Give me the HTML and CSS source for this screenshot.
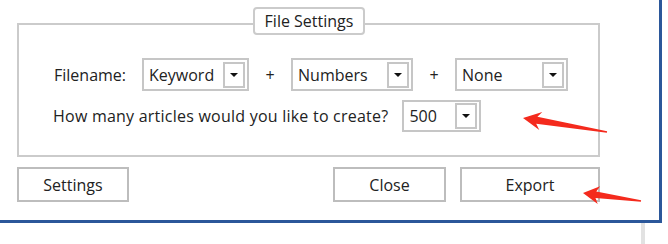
FILE: index.html
```html
<!DOCTYPE html>
<html lang="en">
<head>
  <meta charset="UTF-8">
  <meta name="viewport" content="width=device-width, initial-scale=1.0">
  <title>File Settings</title>
  <link rel="stylesheet" href="styles.css">
</head>
<body>

<div class="window">
  <div class="group">
    <div class="legend">File Settings</div>

    <div class="row">
      <span class="label">Filename:</span>
      <div class="combo combo-keyword">
        <span class="value">Keyword</span>
        <span class="drop"><i class="tri"></i></span>
      </div>
      <span class="plus">+</span>
      <div class="combo combo-numbers">
        <span class="value">Numbers</span>
        <span class="drop"><i class="tri"></i></span>
      </div>
      <span class="plus">+</span>
      <div class="combo combo-none">
        <span class="value">None</span>
        <span class="drop"><i class="tri"></i></span>
      </div>
    </div>

    <div class="row row-count">
      <span class="label">How many articles would you like to create?</span>
      <div class="combo combo-count">
        <span class="value">500</span>
        <span class="drop"><i class="tri"></i></span>
      </div>
    </div>
  </div>

  <div class="buttons">
    <button class="btn btn-settings">Settings</button>
    <button class="btn btn-close">Close</button>
    <button class="btn btn-export">Export</button>
  </div>
</div>

<div class="behind"></div>

<!-- red annotation arrows drawn on top of the screenshot -->
<svg class="marks" width="668" height="244" viewBox="0 0 668 244">
  <polygon fill="#f42a1d" points="523,118 542.3,112.1 537.4,116.8 607.1,131.2 606.9,132.8 536.2,123.8 539.3,129.9"/>
  <polygon fill="#f42a1d" points="583,193 600.1,186.3 596.3,191.6 641.1,200.2 640.9,201.8 595.5,198 597.7,204.1"/>
</svg>

</body>
</html>
```

FILE: styles.css
```css
body {
  margin: 0;
  background-color: #fff;
  font-family: "Open Sans", "Segoe UI", sans-serif;
  font-size: 16px;
  color: #222;
  position: relative;
  height: 244px;
  overflow: hidden;
}
.window {
  width: 662px;
  height: 223px;
  box-sizing: border-box;
  padding: 23px 59px 0 17px;
  border-right: 3px solid #2b579a;
  border-bottom: 3px solid #2b579a;
  background-color: #fff;
}
.group {
  position: relative;
  height: 134px;
  box-sizing: border-box;
  border: 2px solid #cbcbcb;
  padding: 33px 0 0 34px;
}
.legend {
  position: absolute;
  top: -18px;
  left: 234px;
  width: 112px;
  height: 28px;
  box-sizing: border-box;
  border: 2px solid #cbcbcb;
  border-radius: 4px;
  background-color: #fff;
  text-align: center;
  line-height: 24px;
}
.row {
  display: flex;
  align-items: center;
  height: 33px;
}
.row-count {
  margin-top: 9px;
  height: 32px;
}
.label {
  margin-left: 1px;
  margin-right: 16px;
}
.row-count .label {
  margin-left: 0;
  margin-right: 14px;
  letter-spacing: 0.23px;
}
.plus {
  width: 42px;
  text-align: center;
}
.combo {
  display: flex;
  align-items: center;
  justify-content: space-between;
  height: 33px;
  box-sizing: border-box;
  border: 2px solid #c6c6c6;
  padding: 0 2px 0 5px;
}
.row-count .combo {
  height: 32px;
}
.combo-keyword { width: 107px; }
.combo-numbers { width: 122px; }
.combo-none { width: 113px; }
.combo-count { width: 79px; }
.drop {
  display: flex;
  align-items: center;
  justify-content: center;
  width: 22px;
  height: 26px;
  box-sizing: border-box;
  border: 2px solid #c6c6c6;
}
.tri {
  width: 0;
  height: 0;
  border-left: 4px solid transparent;
  border-right: 4px solid transparent;
  border-top: 4px solid #111;
}
.buttons {
  display: flex;
  margin-top: 10px;
  gap: 14px;
}
.btn {
  height: 35px;
  box-sizing: border-box;
  border: 2px solid #bdbdbd;
  background-color: #fff;
  font-family: inherit;
  font-size: 16px;
  color: #222;
  padding: 0;
}
.btn-settings { width: 112px; }
.btn-close { width: 113px; margin-left: auto; }
.btn-export { width: 140px; }
.behind {
  width: 4px;
  height: 21px;
  margin-left: 641px;
  background-color: #e2e2e2;
}
.marks {
  position: absolute;
  top: 0;
  left: 0;
  pointer-events: none;
}
```
